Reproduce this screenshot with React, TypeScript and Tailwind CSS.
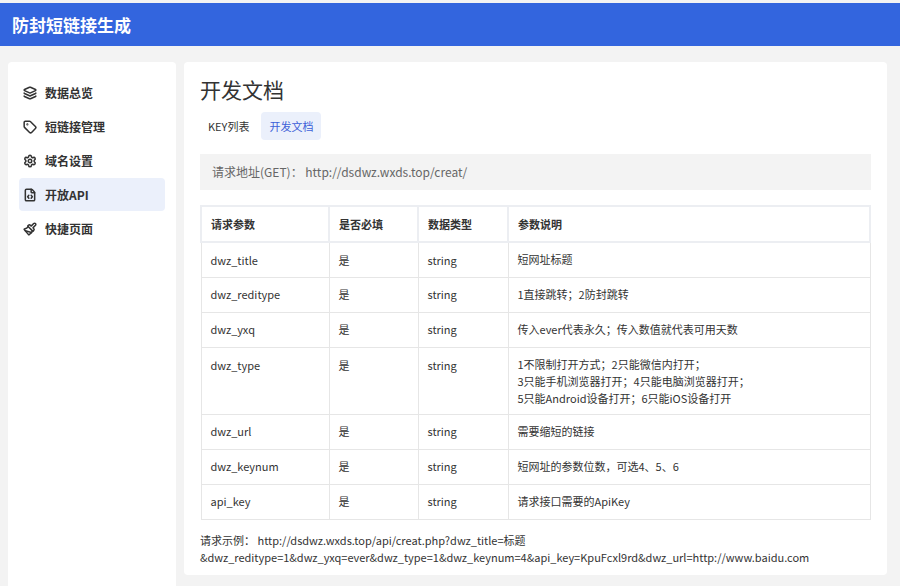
import { Layers, Tag, Settings, FileCode, Paintbrush } from 'lucide-react';

const rows: [string, string, string, string[]][] = [
  ['dwz_title', '是', 'string', ['短网址标题']],
  ['dwz_reditype', '是', 'string', ['1直接跳转；2防封跳转']],
  ['dwz_yxq', '是', 'string', ['传入ever代表永久；传入数值就代表可用天数']],
  ['dwz_type', '是', 'string', ['1不限制打开方式；2只能微信内打开；', '3只能手机浏览器打开；4只能电脑浏览器打开；', '5只能Android设备打开；6只能iOS设备打开']],
  ['dwz_url', '是', 'string', ['需要缩短的链接']],
  ['dwz_keynum', '是', 'string', ['短网址的参数位数，可选4、5、6']],
  ['api_key', '是', 'string', ['请求接口需要的ApiKey']],
];

const nav = [
  { icon: Layers, label: '数据总览' },
  { icon: Tag, label: '短链接管理' },
  { icon: Settings, label: '域名设置' },
  { icon: FileCode, label: '开放API', active: true },
  { icon: Paintbrush, label: '快捷页面' },
];

export default function App() {
  return (
    <div className="h-[586px] overflow-hidden bg-[#f3f3f3] pt-[3px] text-[#333]" style={{ fontFamily: '"Noto Sans CJK SC", "Noto Sans", sans-serif' }}>
      <div className="flex h-[43px] items-center bg-[#3365de] px-3 text-[17px] font-bold text-white">防封短链接生成</div>
      <div className="flex gap-2 px-2 pt-4">
        <div className="h-[540px] w-[168px] rounded bg-white px-[11px] pt-[14px]">
          {nav.map(({ icon: Icon, label, active }) => (
            <div key={label} className={`mb-[1px] flex h-[33px] items-center gap-[8px] rounded px-[4px] text-[12px] font-bold ${active ? 'bg-[#ebf0fb]' : ''}`}>
              <Icon size={14} strokeWidth={2.6} className="text-[#333]" />
              {label}
            </div>
          ))}
        </div>
        <div className="h-[513px] flex-1 rounded bg-white px-4 pt-[12px] mr-[5px]">
          <div className="text-[21px] text-[#333]">开发文档</div>
          <div className="mt-[6px] flex gap-1 text-[11px]">
            <div className="px-[8px] py-[6px] text-[#333]">KEY列表</div>
            <div className="rounded bg-[#ebf0fb] px-[8px] py-[6px] text-[#3d5fd8]">开发文档</div>
          </div>
          <div className="mt-[14px] flex h-[36px] items-center bg-[#f3f3f3] px-[12px] text-[12px] text-[#666]">请求地址(GET)： http://dsdwz.wxds.top/creat/</div>
          <table className="mt-[15px] w-full border-collapse text-[11px]">
            <thead>
              <tr className="h-[36px] font-bold">
                {['请求参数', '是否必填', '数据类型', '参数说明'].map((h, i) => (
                  <th key={h} className={`border-2 border-[#eceef2] px-[9px] text-left ${['w-[128px]', 'w-[89px]', 'w-[90px]', ''][i]}`}>{h}</th>
                ))}
              </tr>
            </thead>
            <tbody>
              {rows.map(([a, b, c, d]) => (
                <tr key={a} className={d.length > 1 ? 'h-[67px] align-top' : 'h-[35px]'}>
                  {[a, b, c].map((v, i) => (
                    <td key={i} className={`border border-[#e6e6e6] px-[9px] ${d.length > 1 ? 'pt-[9px]' : ''}`}>{v}</td>
                  ))}
                  <td className={`border border-[#e6e6e6] px-[9px] leading-[17px] ${d.length > 1 ? 'pt-[8px]' : ''}`}>{d.map(l => <div key={l}>{l}</div>)}</td>
                </tr>
              ))}
            </tbody>
          </table>
          <div className="mt-[12px] text-[11px] leading-[17px] text-[#333]">
            请求示例： http://dsdwz.wxds.top/api/creat.php?dwz_title=标题<br />
            &amp;dwz_reditype=1&amp;dwz_yxq=ever&amp;dwz_type=1&amp;dwz_keynum=4&amp;api_key=KpuFcxl9rd&amp;dwz_url=http://www.baidu.com
          </div>
        </div>
      </div>
    </div>
  );
}
